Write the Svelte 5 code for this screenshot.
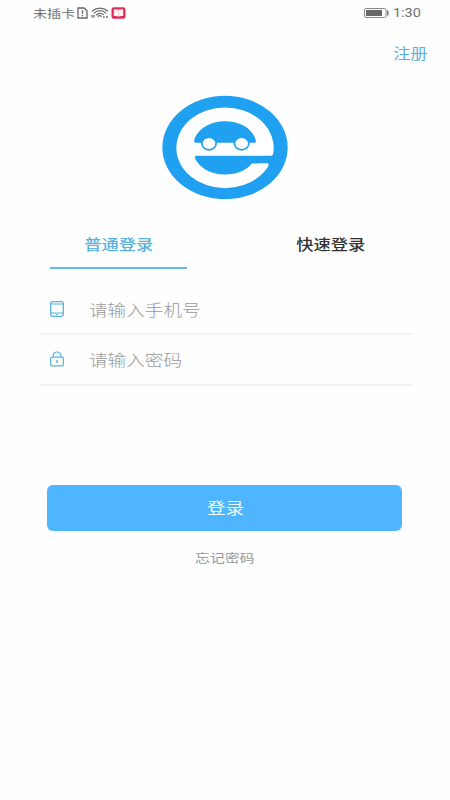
<script>
  let phone = $state('');
  let password = $state('');
  let active = $state(0);
  const tabs = ['普通登录', '快速登录'];
</script>

<main>
  <header class="status">
    <span class="carrier"><span class="wide">未插卡</span></span>
    <svg class="sim" width="11" height="12" viewBox="0 0 11 12" fill="none" stroke="#666">
      <path d="M1 1h6l3 2.7V11H1z" stroke-width="1.3" />
      <path d="M5.5 3.2v3.6M5.5 8v1.3" stroke-width="1.4" />
    </svg>
    <svg class="wifi" width="18" height="11" viewBox="0 0 18 11" fill="none" stroke="#6c6c6c" stroke-width="1.2">
      <path d="M1 4.2Q9-2 17 4.2M2.8 6.2Q9 1.2 15.2 6.2M4.8 8.2Q9 4.6 12.8 7.8M6.6 9.6Q9 7.8 10.6 9.6" />
      <path d="M1 8v2.5M3 8v2.5M12 10h1.6M15 10h2" stroke-width="1.3" />
    </svg>
    <svg class="book" width="15" height="12" viewBox="0 0 15 12">
      <rect x=".5" y=".3" width="14" height="11.4" rx="2.3" fill="#df2d55" />
      <path d="M2.8 2.5q2.6-.4 4.7.3q2.1-.7 4.7-.3v6.6q-2.5-.3-4.7.3q-2.2-.6-4.7-.3z" fill="#fff0f3" />
      <path d="M7.5 3v6" stroke="#f5b5c2" stroke-width=".5" />
    </svg>
    <svg class="battery" width="25" height="10" viewBox="0 0 25 10">
      <rect x=".5" y=".5" width="21.5" height="9" rx="1.5" fill="#fff" stroke="#888" />
      <rect x="2" y="2" width="16" height="6" fill="#686868" />
      <rect x="23" y="2.5" width="1.5" height="5" fill="#777" />
    </svg>
    <span class="time"><span class="wide">1:30</span></span>
  </header>

  <nav><a href="#register"><span class="wide">注册</span></a></nav>

  <svg class="logo" width="126" height="104" viewBox="21 14.5 378 312">
    <ellipse cx="210" cy="172" rx="188" ry="155" fill="#20a0f0" />
    <ellipse cx="210" cy="173" rx="146" ry="121" fill="#fff" />
    <path d="M119 157Q116 153 119 144C134 111 169 93 210 93S286 111 300 142L303 154Q303 158 297 158H122Z" fill="#20a0f0" />
    <path d="M124 197H348Q356 196 357 184L372 190V240L338 230Q344 220 336 220H290C276 240 246 253 210 253C164 253 132 230 120 204Q118 197 124 197Z" fill="#20a0f0" />
    <path d="M338 230Q344 220 336 220H310V236Z" fill="#fff" />
    <g fill="#fff" stroke="#20a0f0" stroke-width="5">
      <ellipse cx="162" cy="160" rx="21.5" ry="19" />
      <ellipse cx="260" cy="160" rx="21.5" ry="19" />
    </g>
  </svg>

  <div class="tabs">
    {#each tabs as tab, i}
      <button class:active={active === i} onclick={() => (active = i)}><span class="wide">{tab}</span></button>
    {/each}
  </div>

  <form onsubmit={(e) => e.preventDefault()}>
    <label>
      <svg width="14" height="16" viewBox="0 0 14 16" fill="none" stroke="#58b2dc">
        <rect x=".7" y=".7" width="12.6" height="14.6" rx="1.8" stroke-width="1.3" />
        <path d="M1 3h12M1 12h12" stroke-width="1.1" />
        <path d="M5.8 13.6h2.4" />
      </svg>
      <input bind:value={phone} placeholder="请输入手机号" />
    </label>
    <label>
      <svg width="14" height="16" viewBox="0 0 14 16" fill="none" stroke="#58b2dc">
        <rect x=".7" y="6.2" width="12.6" height="8.6" rx="1" stroke-width="1.2" />
        <path d="M3.2 6V4.6Q3.5 1 7 1t3.8 3.6V6" stroke-width="1.2" />
        <path d="M7 9v3" stroke-width="1.5" />
      </svg>
      <input type="password" bind:value={password} placeholder="请输入密码" />
    </label>
    <button class="submit"><span class="wide">登录</span></button>
  </form>
  <a class="forgot" href="#forgot"><span class="wide">忘记密码</span></a>
</main>

<style>
  :global(body) { background: #fefefe; }
  main {
    width: 450px;
    height: 800px;
    overflow: hidden;
    display: flex;
    flex-direction: column;
    background: #fefefe;
    font-family: 'Noto Sans CJK SC', sans-serif;
  }
  a { text-decoration: none; }
  button { border: 0; padding: 0; background: none; font-family: inherit; cursor: pointer; }
  .wide { display: inline-block; white-space: nowrap; transform: scaleX(1.2); }
  .status {
    height: 26px;
    flex: none;
    box-sizing: border-box;
    display: flex;
    align-items: center;
    padding: 0 30px 1px 33px;
    color: #707070;
    font-size: 11.7px;
    line-height: 24px;
  }
  .status .wide { transform-origin: left; }
  .carrier { width: 44px; }
  .wifi { margin-left: 3px; }
  .book { margin-left: 2px; }
  .battery { margin-left: auto; }
  .time { width: 27px; margin-left: 4px; font-family: Roboto, sans-serif; font-size: 12px; }
  nav {
    height: 56px;
    flex: none;
    box-sizing: border-box;
    display: flex;
    justify-content: flex-end;
    align-items: center;
    padding: 0 25px 4px 0;
    color: #58b2dc;
    font-size: 14.3px;
  }
  nav a { color: inherit; }
  .logo { flex: none; align-self: center; margin-top: 13px; }
  .tabs { display: flex; flex: none; margin-top: 23px; height: 48px; justify-content: space-between; padding: 0 51px 0 50px; }
  .tabs button {
    width: 137px;
    height: 47px;
    box-sizing: border-box;
    padding-bottom: 3px;
    color: #333;
    font-size: 14.4px;
    font-weight: 500;
    border-bottom: 2px solid transparent;
  }
  .tabs button.active { color: #58b2dc; border-color: #62b9ed; }
  form { display: flex; flex-direction: column; flex: none; margin-top: 14px; }
  label {
    box-sizing: border-box;
    margin: 0 37px 0 40px;
    height: 51px;
    display: flex;
    align-items: center;
    padding-left: 10px;
    border-bottom: 2px solid #f3f3f3;
  }
  label + label { padding-bottom: 1px; }
  input {
    width: 200px;
    height: 34px;
    border: 0;
    outline: 0;
    background: none;
    margin-left: 25px;
    padding: 0;
    font: 300 15.5px 'Noto Sans CJK SC', sans-serif;
    color: #555;
    transform: scaleX(1.2);
    transform-origin: left;
  }
  input::placeholder { color: #999; opacity: 1; }
  .submit {
    margin: 99px 48px 0 47px;
    height: 46px;
    padding: 0 0 2px 1px;
    border-radius: 6px;
    background: #50b5ff;
    color: #eefaf0;
    font-size: 15.4px;
  }
  .forgot { align-self: center; margin-top: 17px; font-size: 12.4px; line-height: 20px; color: #999; }
</style>
